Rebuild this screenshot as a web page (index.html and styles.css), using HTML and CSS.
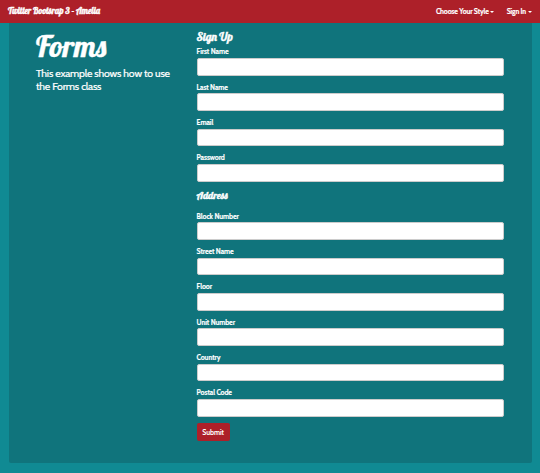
FILE: index.html
```html
<!DOCTYPE html>
<html lang="en">
<head>
<meta charset="utf-8">
<title>Forms</title>
<link rel="stylesheet" href="styles.css">
</head>
<body>
<nav class="navbar">
  <a class="brand">Twitter Bootsrap 3 - Amelia</a>
  <div class="menu">
    <a class="style-link">Choose Your Style<i class="caret"></i></a>
    <a class="sign-link">Sign In<i class="caret"></i></a>
  </div>
</nav>
<main class="container">
  <section class="intro">
    <h1>Forms</h1>
    <p>This example shows how to use<br>the Forms class</p>
  </section>
  <form>
    <h2>Sign Up</h2>
    <div class="field"><label for="first">First Name</label><input id="first"></div>
    <div class="field"><label for="last">Last Name</label><input id="last"></div>
    <div class="field"><label for="email">Email</label><input id="email"></div>
    <div class="field"><label for="password">Password</label><input id="password" type="password"></div>
    <h3>Address</h3>
    <div class="field"><label for="block">Block Number</label><input id="block"></div>
    <div class="field"><label for="street">Street Name</label><input id="street"></div>
    <div class="field"><label for="floor">Floor</label><input id="floor"></div>
    <div class="field"><label for="unit">Unit Number</label><input id="unit"></div>
    <div class="field"><label for="country">Country</label><input id="country"></div>
    <div class="field"><label for="postal">Postal Code</label><input id="postal"></div>
    <button type="button">Submit</button>
  </form>
</main>
</body>
</html>
```
FILE: styles.css
```css
* { box-sizing: border-box; }
body {
  margin: 0;
  height: 473px;
  overflow: hidden;
  background: #108a93;
  color: #fff;
  font-family: Cabin, Lato, "Liberation Sans", sans-serif;
  font-size: 7px;
}
.navbar {
  height: 23px;
  padding: 0 8px;
  display: flex;
  align-items: center;
  justify-content: space-between;
  background: #ad2029;
}
.brand, h1, h2, h3 {
  font-family: Lobster, "Liberation Serif", serif;
  font-weight: normal;
  -webkit-text-stroke: 0.4px #fff;
}
.brand { font-size: 8.6px; line-height: 21px; height: 23px; white-space: nowrap; }
.menu { display: flex; gap: 13px; height: 23px; line-height: 23px; font-weight: bold; }
.menu a { white-space: nowrap; letter-spacing: -0.15px; -webkit-text-stroke: 0.15px #fff; }
.caret {
  display: inline-block;
  margin-left: 2px;
  vertical-align: 1px;
  border: 2px solid transparent;
  border-top-color: #fff;
  border-bottom: 0;
}
.style-link .caret { margin-left: 1px; }
.container {
  width: 523px;
  height: 440px;
  margin-left: 9px;
  padding-left: 27px;
  display: flex;
  background: #10747c;
  border-radius: 0 0 2px 2px;
}
.intro { width: 160.6px; flex: none; }
h1 {
  margin: 3px 0 0;
  font-size: 30px;
  line-height: 40px;
}
p {
  margin: 0.5px 0 0;
  font-size: 10.5px;
  line-height: 13.5px;
  letter-spacing: -0.18px;
  white-space: nowrap;
  -webkit-text-stroke: 0.2px #fff;
}
form { width: 307.4px; }
h2 { margin: 6px 0 0; font-size: 11.3px; line-height: 17px; height: 17.3px; }
h3 { margin: 1px 0 0; font-size: 9.8px; line-height: 12px; height: 22px; }
.field { height: 35.35px; }
label {
  display: block;
  height: 11.6px;
  line-height: 11.6px;
  font-weight: bold;
  letter-spacing: -0.08px;
  -webkit-text-stroke: 0.15px #fff;
}
input {
  display: block;
  width: 307.4px;
  height: 17.7px;
  padding: 0 4px;
  border: 1px solid #ccc;
  border-radius: 2px;
  background: #fff;
  font: inherit;
}
button {
  display: block;
  width: 33px;
  height: 18px;
  padding: 0;
  border: 0;
  border-radius: 2px;
  background: #ad2029;
  color: #fff;
  font: bold 7px/19px Cabin, Lato, sans-serif;
  letter-spacing: -0.1px;
}
```
